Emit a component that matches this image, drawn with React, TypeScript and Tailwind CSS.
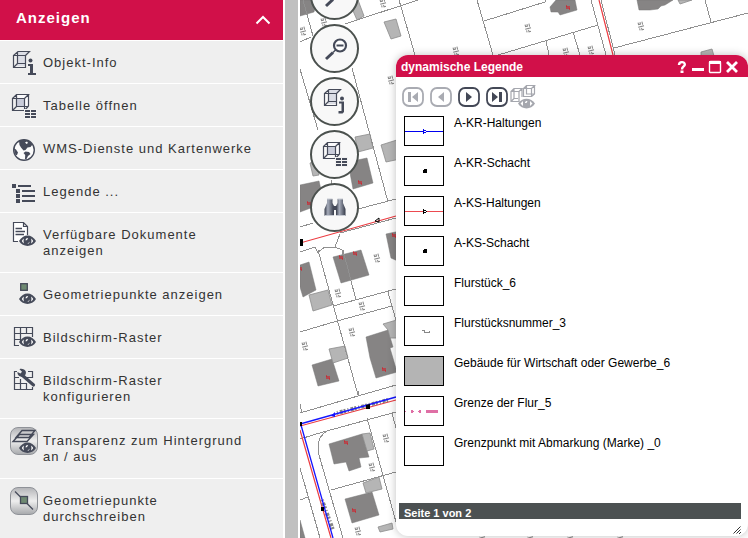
import type { ReactNode } from "react";

const INK = "#454a59";

function Cube() {
  return (
    <>
      <path d="M5.5 2.5H17.5V14L13 18.5" fill="#fafafc" />
      <rect x="5" y="6" width="8" height="8" fill="#c9ccda" />
      <path
        d="M1.5 6.5H13.5V18.5H1.5ZM1.5 6.5L5.5 2.5H17.5L13.5 6.5M17.5 2.5V14L13.5 18.5M5.5 2.5V14.5H17M5.5 14.5L1.5 18.5"
        fill="none"
        stroke={INK}
        strokeWidth="1.2"
      />
    </>
  );
}

function Eye({ x = 0, y = 0 }: { x?: number; y?: number }) {
  return (
    <g transform={`translate(${x} ${y})`}>
      <path d="M0 6C4 -1.5 13 -1.5 17 6C13 12.5 4 12.5 0 6Z" fill={INK} />
      <path
        d="M2.8 6C3.4 4.800 4.200 4 5 3.500C4.400 5 4.400 7 5 8.500C4.200 8 3.400 7.200 2.800 6ZM14.200 6C13.600 4.800 12.800 4 12 3.500C12.600 5 12.600 7 12 8.500C12.800 8 13.600 7.200 14.200 6Z"
        fill="#fff"
      />
      <path d="M6.500 5.500C6.500 3.500 8 2.800 9.200 3C8.500 3.500 8.800 4.500 8 5C7.500 5.400 6.800 5 6.500 5.500ZM10.600 6.500C10.600 8 9.500 9 8 8.800C9.300 8.300 10 7.600 10.600 6.500Z" fill="#fff" />
    </g>
  );
}

function Icon({ children }: { children: ReactNode }) {
  return (
    <svg viewBox="0 0 28 28" className="size-7 shrink-0" aria-hidden="true">
      {children}
    </svg>
  );
}

function SlantedCube() {
  return (
    <g transform="translate(2 0)">
      <path d="M6 2H18L14 5V16H5V6Z" fill="#dcdee6" />
      <path
        d="M1.5 5.5H13.5V17.5H1.5ZM1.5 5.5L6 1.5H17.5L13.5 5.5M5.5 2V13.5H13M5.5 13.5L1.5 17.5"
        fill="none"
        stroke={INK}
        strokeWidth="1.2"
      />
    </g>
  );
}

function InfoIcon() {
  return (
    <Icon>
      <SlantedCube />
      <circle cx="20.5" cy="10.5" r="2" fill={INK} />
      <path d="M18 14H23V23H26V25H18V23H20V16H18Z" fill={INK} />
    </Icon>
  );
}

function InfoToolIcon() {
  return (
    <Icon>
      <SlantedCube />
      <circle cx="21" cy="10.5" r="2" fill={INK} />
      <path d="M18 13.5H23V24L21.5 25.5H17.5V23H20.5V15.5H18Z" fill={INK} />
    </Icon>
  );
}

function TableIcon() {
  return (
    <Icon>
      <g transform="translate(1 -1)">
        <Cube />
      </g>
      <path d="M14 16H27V26H14Z" fill="#f2f2f2" />
      <path
        d="M15 17H20V19H15ZM21 17H26V19H21ZM15 20H20V22H15ZM21 20H26V22H21ZM15 23H20V25H15ZM21 23H26V25H21Z"
        fill={INK}
      />
    </Icon>
  );
}

function GlobeIcon() {
  return (
    <Icon>
      <circle cx="14" cy="14" r="10.3" fill="#fbfbfb" stroke={INK} strokeWidth="1.4" />
      <path
        d="M9 5L14 3.5L20 5.500L22.500 8.500L20.500 11L17.500 11.500L15.500 14L13.500 14.500L11 11.500L9.500 9ZM15.500 15.500L19 16L20.500 18L18 20L16.500 23L15 23L15.200 19L13.500 17ZM3.700 12L6 13.500L8 16.500L7 19L5.500 19Z"
        fill={INK}
      />
      <path d="M15 6.500L17 5.500L18 7L16.500 8Z" fill="#fff" />
    </Icon>
  );
}

function LegendIcon() {
  return (
    <Icon>
      <path
        d="M2 5H6V9H2ZM6 10H10V14H6ZM6 15H10V19H6ZM6 20H10V24H6ZM8 6H21V8H8ZM12 11H25V13H12ZM12 16H25V18H12ZM12 21H25V23H12Z"
        fill={INK}
      />
    </Icon>
  );
}

function DocumentIcon() {
  return (
    <Icon>
      <path d="M8 20.5H3.5V1.5H13.5L17.5 5.5V14M13.5 1.5V5.5H17.5" fill="#fff" stroke={INK} strokeWidth="1.2" />
      <path d="M5.5 7.5H12M5.5 10.5H15M5.5 13.5H14" stroke={INK} strokeWidth="1.3" />
      <Eye x={9} y={14} />
    </Icon>
  );
}

function PointEyeIcon() {
  return (
    <Icon>
      <rect x="10.7" y="1.7" width="6.6" height="6.6" fill="#6f8a72" stroke={INK} strokeWidth="1.3" />
      <Eye x={9} y={11} />
    </Icon>
  );
}

function GridEyeIcon() {
  return (
    <Icon>
      <path
        d="M9 20.5H4.5V2.5H22.5V12M10.5 2.5V18M16.5 2.5V9M4.5 8.5H22.5M4.5 14.5H11"
        fill="none"
        stroke={INK}
        strokeWidth="1.2"
      />
      <Eye x={9} y={11} />
    </Icon>
  );
}

function GridWrenchIcon() {
  return (
    <Icon>
      <path
        d="M7 4.5H4.5V22.5H22.5V20M4.5 10.5H9M4.5 16.5H17M10.5 12V22.5M16.5 16V22.5M18 4.5H22.5V11M17 10.5H22.5"
        fill="none"
        stroke={INK}
        strokeWidth="1.2"
      />
      <path d="M12 8L23.5 18" stroke={INK} strokeWidth="3.2" strokeLinecap="round" />
      <path d="M9.5 2.2L12 4.8L10.500 6.500L7.500 5C7 8 10 10.500 13 9.500C16.500 8.500 17 4 14 2.500C12.500 1.700 10.500 1.500 9.500 2.200Z" fill={INK} />
    </Icon>
  );
}

function FramedIcon({ children }: { children: ReactNode }) {
  return (
    <span className="block size-7 shrink-0 rounded-lg border border-[#8f9298] bg-linear-to-b from-[#b5b6b9] via-[#eeeeee] to-[#a9abae]">
      <svg viewBox="1 1 26 26" className="size-full" aria-hidden="true">
        {children}
      </svg>
    </span>
  );
}

function LayersEyeIcon() {
  return (
    <FramedIcon>
      <path
        d="M3 14.5L9.5 7.5H23.5L17 14.5ZM6 10.5L12 3.5H25L19 10.5Z"
        fill="none"
        stroke={INK}
        strokeWidth="1.4"
      />
      <Eye x={9} y={15} />
    </FramedIcon>
  );
}

function PointLineIcon() {
  return (
    <FramedIcon>
      <path d="M5 4.5L23 22.5" stroke={INK} strokeWidth="1.3" />
      <rect x="10.5" y="9.5" width="7" height="7" fill="#6f8a72" stroke={INK} strokeWidth="1.3" />
    </FramedIcon>
  );
}

function ZoomOutIcon() {
  return (
    <Icon>
      <path d="M5 24L12 17.5" stroke={INK} strokeWidth="3" />
      <path d="M12 17.5L15 14.5" stroke={INK} strokeWidth="1.5" />
      <circle cx="19" cy="10.5" r="6" fill="#fff" stroke={INK} strokeWidth="2.2" />
      <path d="M15.5 10.5H22.5" stroke={INK} strokeWidth="2" />
    </Icon>
  );
}

function BinocularsIcon() {
  return (
    <Icon>
      <defs>
        <linearGradient id="barrel">
          <stop offset="0" stopColor="#353a48" />
          <stop offset="0.35" stopColor="#a7adbb" />
          <stop offset="1" stopColor="#353a48" />
        </linearGradient>
      </defs>
      <path d="M6 5H11.5V9L13 12V22H3.5V15L6 9Z" fill="url(#barrel)" />
      <path d="M16.5 5H22V9L24.5 15V22H15V12L16.5 9Z" fill="url(#barrel)" />
      <path d="M12 12H16V16H12Z" fill={INK} />
      <path d="M6 5H11.5M16.5 5H22M3.5 21.5H13M15 21.5H24.5" stroke="#c8ccd4" />
    </Icon>
  );
}

const menu = [
  { lines: ["Objekt-Info"], icon: <InfoIcon /> },
  { lines: ["Tabelle öffnen"], icon: <TableIcon /> },
  { lines: ["WMS-Dienste und Kartenwerke"], icon: <GlobeIcon /> },
  { lines: ["Legende ..."], icon: <LegendIcon /> },
  { lines: ["Verfügbare Dokumente", "anzeigen"], icon: <DocumentIcon /> },
  { lines: ["Geometriepunkte anzeigen"], icon: <PointEyeIcon /> },
  { lines: ["Bildschirm-Raster"], icon: <GridEyeIcon /> },
  { lines: ["Bildschirm-Raster", "konfigurieren"], icon: <GridWrenchIcon /> },
  { lines: ["Transparenz zum Hintergrund", "an / aus"], icon: <LayersEyeIcon /> },
  { lines: ["Geometriepunkte", "durchschreiben"], icon: <PointLineIcon /> },
];

function Sidebar() {
  return (
    <nav className="w-[283px] shrink-0 bg-[#efefef]">
      <button className="flex h-10 w-full items-center justify-between bg-[#d11049] pr-3 pb-1 pl-4 text-[15px] font-bold tracking-[1px] text-white">
        Anzeigen
        <svg viewBox="0 0 16 10" className="mt-1 h-[10px] w-4" aria-hidden="true">
          <path d="M1.5 8.5L8 2L14.5 8.5" fill="none" stroke="#fff" strokeWidth="2" />
        </svg>
      </button>
      <ul className="border-t border-white">
        {menu.map((item, i) => (
          <li key={i} className="border-b border-white">
            <button
              className={
                item.lines.length > 1
                  ? "flex h-[59px] w-full items-start gap-[5px] pt-2 pl-[10px] text-left"
                  : "flex h-[42px] w-full items-start gap-[5px] pt-[9px] pl-[10px] text-left"
              }
            >
              {item.icon}
              <span
                className={
                  item.lines.length > 1
                    ? "pt-[6px] text-[13px] leading-4 tracking-[1px] text-[#333333]"
                    : "pt-[5px] text-[13px] leading-4 tracking-[1px] text-[#333333]"
                }
              >
                {item.lines.map((line) => (
                  <span key={line} className="block whitespace-nowrap">
                    {line}
                  </span>
                ))}
              </span>
            </button>
          </li>
        ))}
      </ul>
    </nav>
  );
}

const houses = [
  "300,0 317,0 314,12 300,16",
  "348,162 367,158 373,183 353,189",
  "300,185 319,181 324,203 300,212",
  "333,257 361,250 369,275 341,283",
  "386,234 400,231 400,262 391,258",
  "300,265 309,262 316,290 303,297 300,287",
  "312,365 332,359 339,381 318,386",
  "366,337 388,330 393,347 390,348 397,372 376,378 370,358",
  "329,444 362,434 369,457 359,458 361,467 349,471 346,462 334,464",
  "345,499 372,492 379,515 352,523",
  "300,520 305,538 300,538",
  "550,7 556,0 575,0 577,10 560,15 558,12 551,12",
  "637,0 673,0 665,5 661,6 658,9 650,10 639,10",
];

const sheds = [
  "352,0 358,0 364,16 357,20 350,4",
  "384,22 396,19 401,36 391,39",
  "355,137 370,134 373,148 358,152",
  "381,145 400,139 400,159 386,162",
  "310,163 316,161 319,175 313,176",
  "309,295 328,290 332,305 313,311",
  "329,349 345,346 348,358 333,363",
  "383,324 400,319 400,338 390,338 388,330",
  "362,434 370,433 374,449 367,451",
  "363,483 379,477 382,489 366,493",
  "378,527 392,523 393,529 380,532",
  "678,0 692,0 680,4",
  "701,52 712,49 714,56 701,56",
];

const parcels =
  "M303,0L313,36M300,42L311,37M345,24L418,0M399,0L415,55M352,68L388,202M300,69L318,130M358,209L396,199M300,227L313,223M331,180L331,184" +
  "M340,233L396,218M300,252L315,247L320,256M318,250L358,395M318,252L325,247H335L342,250L343,255M340,234L335,247M343,250L356,300M333,306L396,289M300,332L337,321L392,306M388,292L396,320" +
  "M300,413L358,396L396,385M358,395L359,391M300,404L302,413M300,439L323,432L396,412M327,431Q315,438 319,455L343,538M300,468L320,538M300,500L308,497" +
  "M367,418L396,522M392,413L396,428M331,490L396,472M477,0L493,55M484,21L545,2M498,55L598,25M546,41L549,55M591,0L606,55M601,0L615,55M614,48L748,13M705,0L711,22M573,32L580,55M545,2V0";

// parcel number marks: x, y
const marks = [
  [303, 31], [324, 22], [383, 3], [391, 80], [338, 293], [362, 306], [352, 332], [305, 346],
  [377, 258], [386, 438], [372, 467], [358, 531], [528, 28], [456, 51], [566, 52], [591, 50], [641, 26],
  [482, 537], [530, 537], [570, 537], [620, 537],
];

const houseNumbers = [
  [360, 182], [309, 203], [341, 257], [355, 253], [394, 235], [328, 377], [384, 369], [346, 442], [354, 510], [568, 7], [300, 268],
];

function CityMap() {
  return (
    <svg
      viewBox="300 0 448 538"
      preserveAspectRatio="xMinYMin slice"
      className="block size-full bg-white"
      role="img"
      aria-label="Karte"
    >
      <g fill="#868484">
        {houses.map((points) => (
          <polygon key={points} points={points} stroke="#777" strokeWidth="0.5" />
        ))}
      </g>
      <g fill="#b5b5b5" stroke="#8c8c8c" strokeWidth="0.8">
        {sheds.map((points) => (
          <polygon key={points} points={points} />
        ))}
      </g>
      <path d={parcels} fill="none" stroke="#909090" shapeRendering="crispEdges" />
      {marks.map(([x, y]) => (
        <path
          key={`${x}-${y}`}
          transform={`translate(${x} ${y}) rotate(-15)`}
          d="M-2 -4V-2H0V-4M2 -4V-1M-3 0.5H3M-2 2V4M0 2V4H2"
          fill="none"
          stroke="#858585"
        />
      ))}
      <path d="M300,243L396,216M300,426L396,400M300,430L331,538M599,0L613,55" fill="none" stroke="#ec3b40" strokeWidth="1.2" />
      <path
        d="M337,413L388,400M322,500L333,530"
        stroke="#858585"
        strokeWidth="4"
        strokeDasharray="1 2 3 1 2 2"
      />
      <path d="M300,424L396,397M301,425L333,538" fill="none" stroke="#1414ff" strokeWidth="1.3" />
      <path d="M331,416L335,412V417Z" fill="#1414ff" />
      <path d="M300,239H303V246H300ZM300,422H302V426H300ZM366,405L370,404V409H366ZM321,507H324V511H321Z" fill="#000" />
      <path d="M375,221L379,218V222Z" fill="none" stroke="#000" />
      {houseNumbers.map(([x, y]) => (
        <path key={`${x}-${y}`} transform={`translate(${x} ${y})`} d="M-2 -1H-1V2M1 -1V2H2" fill="none" stroke="#e00d18" />
      ))}
    </svg>
  );
}

const roundButton =
  "grid size-[49px] shrink-0 place-items-center rounded-full border-2 border-[#4b514e] bg-[#f8f8f8]";

function MapTools() {
  return (
    <div className="absolute -top-[29px] left-[10px] flex flex-col gap-1">
      <button className={roundButton} aria-label="Vergrößern">
        <ZoomOutIcon />
      </button>
      <button className={roundButton} aria-label="Verkleinern">
        <ZoomOutIcon />
      </button>
      <button className={roundButton} aria-label="Objekt-Info">
        <InfoToolIcon />
      </button>
      <button className={roundButton} aria-label="Tabelle öffnen">
        <TableIcon />
      </button>
      <button className={roundButton} aria-label="Suchen">
        <BinocularsIcon />
      </button>
    </div>
  );
}

const pager = [
  { label: "Erste Seite", path: "M6 5H9V15H6ZM16 5V15L10 10Z", enabled: false },
  { label: "Vorherige Seite", path: "M14 5V15L8 10Z", enabled: false },
  { label: "Nächste Seite", path: "M8 5V15L14 10Z", enabled: true },
  { label: "Letzte Seite", path: "M6 5V15L12 10ZM13 5H16V15H13Z", enabled: true },
];

const legend = [
  {
    label: "A-KR-Haltungen",
    symbol: (
      <>
        <path d="M0 14H38V15H0Z" fill="#0000f0" />
        <path d="M18.5 12.5V16.5L21.5 14.5Z" fill="#fff" stroke="#0000f0" />
      </>
    ),
  },
  { label: "A-KR-Schacht", symbol: <path d="M18 13L19 12H22V16H18Z" /> },
  {
    label: "A-KS-Haltungen",
    symbol: (
      <>
        <path d="M0 14H38V15H0Z" fill="#ec4a50" />
        <path d="M18.5 12.5V16.5L21.5 14.5Z" fill="#fff" stroke="#000" />
      </>
    ),
  },
  { label: "A-KS-Schacht", symbol: <path d="M18 13L19 12H22V16H18Z" /> },
  { label: "Flurstück_6", symbol: null },
  { label: "Flurstücksnummer_3", symbol: <path d="M17 13.5H19V15H21V14.5M21 15.5H24V14" fill="none" stroke="#888" /> },
  { label: "Gebäude für Wirtschaft oder Gewerbe_6", symbol: <path d="M0 0H38V28H0Z" fill="#b4b4b4" /> },
  {
    label: "Grenze der Flur_5",
    symbol: <path d="M0 14H1V15H0ZM6 13H8L9 14.5L8 16H6ZM13 14L14 13H16V16H14ZM21 13H33V16H21Z" fill="#df6fa5" />,
  },
  { label: "Grenzpunkt mit Abmarkung (Marke) _0", symbol: null },
];

function LegendWindow() {
  return (
    <section className="absolute top-[55px] right-0 bottom-[2px] left-24 flex flex-col overflow-hidden rounded-xl bg-white shadow-[0_0_8px_rgba(0,0,0,0.25)]">
      <header className="flex h-[22px] shrink-0 items-center justify-between bg-[#d11049] pt-px pr-[9px] pl-[5px] text-white">
        <h2 className="text-[12px] font-bold">dynamische Legende</h2>
        <div className="flex items-center gap-[3px]">
          <button aria-label="Hilfe">
            <svg viewBox="0 0 12 14" className="block h-[14px] w-3" aria-hidden="true">
              <path d="M3 5C3 1.2 8.8 1.2 8.8 4.5C8.8 6.5 6 6.5 6 9.5" fill="none" stroke="#fff" strokeWidth="2.4" />
              <path d="M4.5 10.5H7.5V13H4.5Z" fill="#fff" />
            </svg>
          </button>
          <button aria-label="Minimieren">
            <svg viewBox="0 0 14 14" className="block size-[14px]" aria-hidden="true">
              <path d="M1 8H13V11H1Z" fill="#fff" />
            </svg>
          </button>
          <button aria-label="Maximieren">
            <svg viewBox="0 0 14 14" className="block size-[14px]" aria-hidden="true">
              <rect x="1.5" y="1.5" width="11" height="11" rx="1" fill="none" stroke="#fff" strokeWidth="1.4" />
              <path d="M1 1H13V4H1Z" fill="#fff" />
            </svg>
          </button>
          <button aria-label="Schließen">
            <svg viewBox="0 0 14 14" className="block size-[14px]" aria-hidden="true">
              <path d="M2 2L12 12M12 2L2 12" stroke="#fff" strokeWidth="2.8" />
            </svg>
          </button>
        </div>
      </header>

      <div className="flex shrink-0 gap-[6px] px-[6px] pt-[10px]">
        {pager.map((item) => (
          <button key={item.label} aria-label={item.label} disabled={!item.enabled}>
            <svg
              viewBox="0 0 22 20"
              className={item.enabled ? "block h-5 w-[22px] text-[#434856]" : "block h-5 w-[22px] text-[#a9abb2]"}
              aria-hidden="true"
            >
              <rect x="1" y="1" width="20" height="18" rx="6" fill="#fff" stroke="currentColor" strokeWidth="1.8" />
              <path d={item.path} fill="currentColor" />
            </svg>
          </button>
        ))}
        <button aria-label="Sichtbare Objekte" disabled className="-my-1 -ml-1">
          <svg viewBox="0 0 26 28" className="block h-7 w-[26px]" aria-hidden="true">
            <g fill="none" stroke="#a5a7ae" strokeWidth="1.2">
              <path d="M1 8.5H9V18.5H1ZM1 8.5L4 5.5H12L9 8.5M4 5.5V15.5H8M12 5.5V14M1 18.5L4 15.5" />
              <path d="M13.5 5.5H21.5V13.5H13.5ZM13.5 5.5L16.5 2.5H24.5L21.5 5.5M24.5 2.5V11L21.5 13.5M16.5 2.5V11H24" />
            </g>
            <path d="M8 20.5C12 14 21 14 25 20.5C21 27 12 27 8 20.5Z" fill="#a5a7ae" />
            <path d="M10.5 20.5L13 18V23ZM22.5 20.5L20 18V23ZM15 20C15 18.300 16.500 17.800 17.500 18L16.500 20Z" fill="#fff" />
          </svg>
        </button>
      </div>

      <ul className="flex grow flex-col gap-[10px] px-2 pt-[9px]">
        {legend.map((item) => (
          <li key={item.label} className="flex items-start gap-[10px]">
            <span className="block h-[30px] w-10 shrink-0 border border-black">
              <svg viewBox="0 0 38 28" className="block size-full" shapeRendering="crispEdges" aria-hidden="true">
                {item.symbol}
              </svg>
            </span>
            <span className="text-[12px] leading-[14px] text-black">{item.label}</span>
          </li>
        ))}
      </ul>

      <footer className="shrink-0 pr-[7px] pl-[3px]">
        <p className="bg-[#4c5152] pt-1 pl-[5px] text-[11px] leading-3 font-bold text-white">Seite 1 von 2</p>
        <div className="flex h-[17px] items-center justify-end">
          <svg viewBox="0 0 8 8" className="mt-1 size-2" aria-hidden="true">
            <path d="M0.5 7.5L7.5 0.5M3.5 7.5L7.5 3.5M6 8L8 6" stroke="#333" />
          </svg>
        </div>
      </footer>
    </section>
  );
}

export default function App() {
  return (
    <div className="flex h-screen overflow-hidden bg-white font-['Liberation_Sans',Arial,sans-serif]">
      <Sidebar />
      <div className="ml-[2px] w-[13px] shrink-0 bg-[#c0c0c0]" />
      <main className="relative ml-[2px] min-w-0 grow overflow-hidden">
        <CityMap />
        <MapTools />
        <LegendWindow />
      </main>
    </div>
  );
}
